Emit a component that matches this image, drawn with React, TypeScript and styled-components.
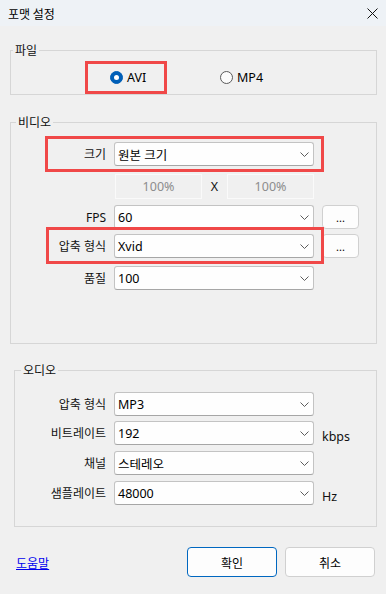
import React from 'react';
import styled, { createGlobalStyle } from 'styled-components';

const GlobalStyle = createGlobalStyle`
  html, body {
    margin: 0;
    padding: 0;
    background: #f0f0f0;
  }
  * {
    box-sizing: border-box;
  }
`;

const Dialog = styled.div`
  width: 386px;
  height: 594px;
  background: #f0f0f0;
  font-family: "Noto Sans", "Noto Sans CJK KR", sans-serif;
  font-size: 12px;
  color: #111;
  display: flex;
  flex-direction: column;
  overflow: hidden;
`;

const TitleBar = styled.div`
  height: 26px;
  flex: none;
  background: #eef2f6;
  display: flex;
  align-items: center;
  justify-content: space-between;
  padding: 0 8px 0 8px;
`;

const Title = styled.span`
  font-family: "Noto Sans CJK KR", sans-serif;
  font-size: 12px;
  color: #000;
`;

const CloseButton = styled.span`
  display: flex;
  width: 20px;
  justify-content: flex-end;
`;

const Group = styled.fieldset<{ $left: number; $top: number; $pt: number; $pb: number }>`
  margin: ${p => p.$top}px 9px 0 ${p => p.$left}px;
  padding: ${p => p.$pt}px 0 ${p => p.$pb}px 0;
  border: 1px solid #d6d6d6;
  min-width: 0;
  display: flex;
  flex-direction: column;
`;

const Legend = styled.legend<{ $ml: number }>`
  font-family: "Noto Sans CJK KR", sans-serif;
  font-size: 12px;
  line-height: 16px;
  padding: 0 2px;
  margin-left: ${p => p.$ml}px;
  color: #111;
`;

const RadioRow = styled.div`
  display: flex;
  align-items: center;
`;

const Highlight = styled.div`
  border: 3px solid #f04848;
`;

const RadioBox = styled(Highlight)`
  margin-left: 74px;
  width: 82px;
  height: 33px;
  display: flex;
  align-items: center;
  padding-left: 22px;
`;

const RadioOption = styled.label<{ $ml?: number }>`
  display: flex;
  align-items: center;
  gap: 4px;
  margin-left: ${p => p.$ml ?? 0}px;
  font-size: 12.5px;
  color: #000;
`;

const RadioDot = styled.span<{ $checked?: boolean }>`
  width: 13px;
  height: 13px;
  border-radius: 50%;
  flex: none;
  background: ${p => (p.$checked ? '#005fb8' : '#fbfbfb')};
  border: 1px solid ${p => (p.$checked ? '#005fb8' : '#5a5a5a')};
  display: flex;
  align-items: center;
  justify-content: center;

  &::after {
    content: '';
    display: ${p => (p.$checked ? 'block' : 'none')};
    width: 5px;
    height: 5px;
    border-radius: 50%;
    background: #fff;
  }
`;

const Row = styled.div<{ $labelW: number; $mt?: number }>`
  position: relative;
  display: grid;
  grid-template-columns: ${p => p.$labelW}px 200px 37px;
  column-gap: 8px;
  align-items: center;
  margin-top: ${p => p.$mt ?? 0}px;
`;

const Label = styled.span`
  text-align: right;
  font-size: 12px;
  color: #111;
  white-space: nowrap;
`;

const Combo = styled.div`
  height: 24px;
  background: #fefefe;
  border: 1px solid #c3c3c3;
  border-bottom-color: #a6a6a6;
  border-radius: 3px;
  display: flex;
  align-items: center;
  justify-content: space-between;
  padding: 0 4px 0 3px;
  font-size: 12.5px;
  color: #000;
`;

const DotsButton = styled.div`
  height: 24px;
  background: #fdfdfd;
  border: 1px solid #d0d0d0;
  border-radius: 4px;
  display: flex;
  align-items: flex-end;
  justify-content: center;
  padding-bottom: 5px;
  font-size: 11px;
  line-height: 1;
  color: #000;
`;

const Unit = styled.span`
  font-size: 12.5px;
  color: #111;
  padding-top: 6px;
`;

const Overlay = styled(Highlight)<{ $l: number; $t: number; $w: number; $h: number }>`
  position: absolute;
  pointer-events: none;
  left: ${p => p.$l}px;
  top: ${p => p.$t}px;
  width: ${p => p.$w}px;
  height: ${p => p.$h}px;
`;

const PercentRow = styled.div`
  grid-column: 2;
  display: flex;
  align-items: center;
  margin-left: 1px;
`;

const PercentBox = styled.div`
  width: 87px;
  height: 25px;
  border: 1px solid #fafafa;
  background: #f0f0f0;
  color: #8d8d8d;
  display: flex;
  align-items: center;
  justify-content: center;
  font-size: 12.5px;
`;

const Times = styled.span`
  width: 25px;
  text-align: center;
  font-size: 12.5px;
  color: #111;
`;

const Footer = styled.div`
  display: flex;
  align-items: center;
  margin-top: 20px;
  padding: 0 11px 0 16px;
  gap: 8px;
`;

const HelpLink = styled.a`
  font-family: "Noto Sans CJK KR", sans-serif;
  font-size: 12px;
  color: #0000ee;
  text-decoration: underline;
  margin-right: auto;
`;

const DialogButton = styled.button<{ $primary?: boolean }>`
  width: 90px;
  height: 30px;
  background: #fdfdfd;
  border: 1px solid ${p => (p.$primary ? '#0067c0' : '#d0d0d0')};
  border-radius: 4px;
  font-family: "Noto Sans CJK KR", sans-serif;
  font-size: 12px;
  color: #000;
  padding: 0;
`;

const Chevron = () => (
  <svg width="9" height="5" viewBox="0 0 9 5">
    <path d="M0.5 0.5 L4.5 4.5 L8.5 0.5" fill="none" stroke="#5c5c5c" strokeWidth="1" />
  </svg>
);

const Select: React.FC<{ value: string }> = ({ value }) => (
  <Combo>
    <span>{value}</span>
    <Chevron />
  </Combo>
);

const App: React.FC = () => {
  return (
    <>
      <GlobalStyle />
      <Dialog>
        <TitleBar>
          <Title>포맷 설정</Title>
          <CloseButton>
            <svg width="11" height="11" viewBox="0 0 11 11">
              <path d="M0.5 0.5 L10.5 10.5 M10.5 0.5 L0.5 10.5" stroke="#111" strokeWidth="1" />
            </svg>
          </CloseButton>
        </TitleBar>

        {/* 파일 */}
        <Group $left={10} $top={16} $pt={3} $pb={0}>
          <Legend $ml={2}>파일</Legend>
          <RadioRow>
            <RadioBox>
              <RadioOption>
                <RadioDot $checked />
                AVI
              </RadioOption>
            </RadioBox>
            <RadioOption $ml={53}>
              <RadioDot />
              MP4
            </RadioOption>
          </RadioRow>
        </Group>

        {/* 비디오 */}
        <Group $left={10} $top={19} $pt={12} $pb={53}>
          <Legend $ml={5}>비디오</Legend>
          <Row $labelW={95}>
            <Label>크기</Label>
            <Select value="원본 크기" />
            <Overlay $l={34} $t={-6} $w={279} $h={36} />
          </Row>
          <Row $labelW={95} $mt={8}>
            <PercentRow>
              <PercentBox>100%</PercentBox>
              <Times>X</Times>
              <PercentBox>100%</PercentBox>
            </PercentRow>
          </Row>
          <Row $labelW={95} $mt={6}>
            <Label>FPS</Label>
            <Select value="60" />
            <DotsButton>...</DotsButton>
          </Row>
          <Row $labelW={95} $mt={5}>
            <Label>압축 형식</Label>
            <Select value="Xvid" />
            <DotsButton>...</DotsButton>
            <Overlay $l={35} $t={-7} $w={278} $h={37} />
          </Row>
          <Row $labelW={95} $mt={8}>
            <Label>품질</Label>
            <Select value="100" />
          </Row>
        </Group>

        {/* 오디오 */}
        <Group $left={14} $top={18} $pt={14} $pb={21}>
          <Legend $ml={6}>오디오</Legend>
          <Row $labelW={91}>
            <Label>압축 형식</Label>
            <Select value="MP3" />
          </Row>
          <Row $labelW={91} $mt={5}>
            <Label>비트레이트</Label>
            <Select value="192" />
            <Unit>kbps</Unit>
          </Row>
          <Row $labelW={91} $mt={6}>
            <Label>채널</Label>
            <Select value="스테레오" />
          </Row>
          <Row $labelW={91} $mt={6}>
            <Label>샘플레이트</Label>
            <Select value="48000" />
            <Unit>Hz</Unit>
          </Row>
        </Group>

        <Footer>
          <HelpLink href="#">도움말</HelpLink>
          <DialogButton $primary>확인</DialogButton>
          <DialogButton>취소</DialogButton>
        </Footer>
      </Dialog>
    </>
  );
};

export default App;
